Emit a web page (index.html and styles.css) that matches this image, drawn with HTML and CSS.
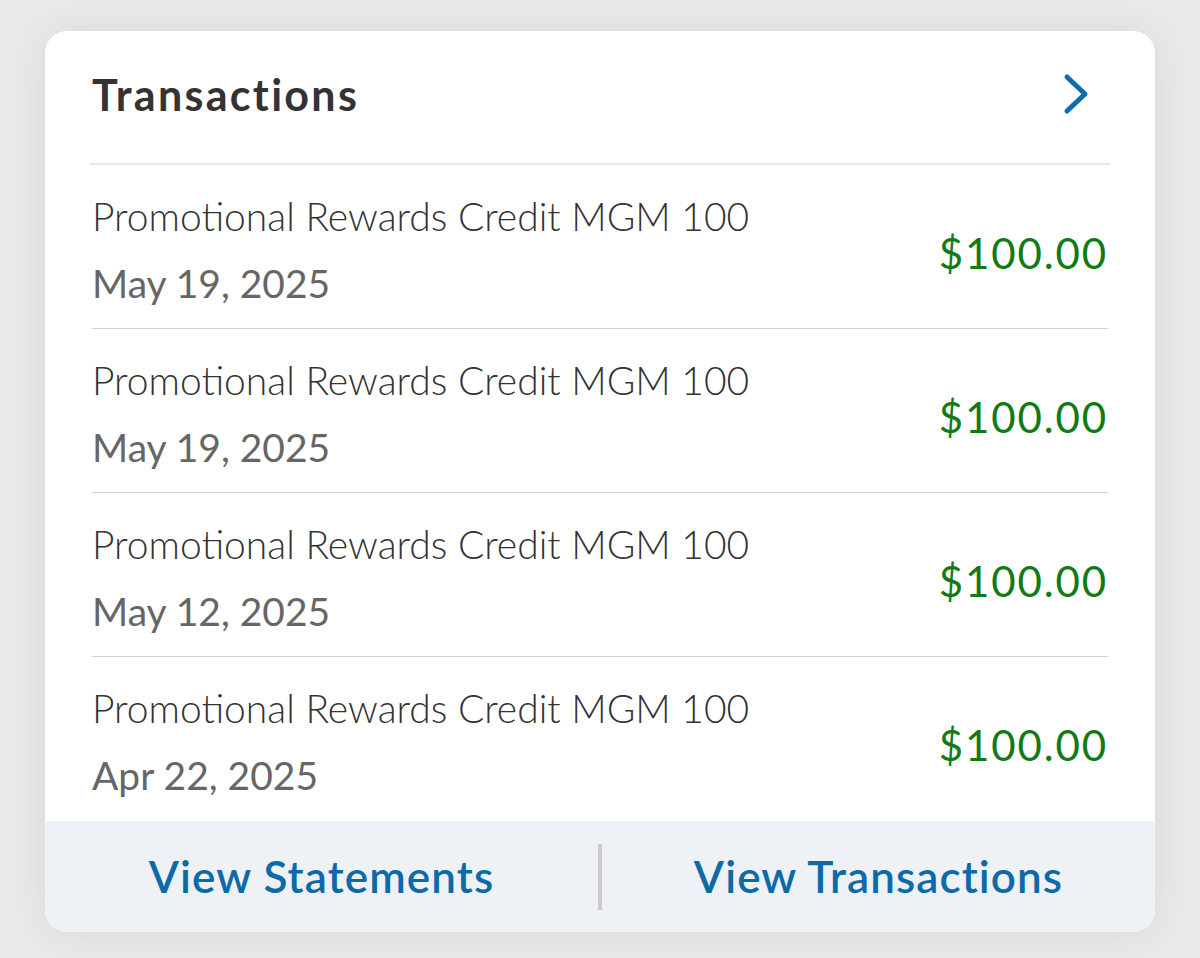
FILE: index.html
```html
<!DOCTYPE html>
<html lang="en">
<head>
<meta charset="utf-8">
<title>Transactions</title>
<link rel="stylesheet" href="styles.css">
</head>
<body>
<div class="card">
  <div class="card-header">
    <h2 class="title">Transactions</h2>
    <svg class="chevron" width="30" height="44" viewBox="0 0 30 44" aria-hidden="true">
      <path d="M5 5 L23 22 L5 39" fill="none" stroke="#0b6cb0" stroke-width="5" stroke-linecap="round" stroke-linejoin="round"/>
    </svg>
  </div>
  <ul class="list">
    <li class="row">
      <div class="info"><div class="desc">Promotional Rewards Credit MGM 100</div><div class="date">May 19, 2025</div></div>
      <div class="amount">$100.00</div>
    </li>
    <li class="row">
      <div class="info"><div class="desc">Promotional Rewards Credit MGM 100</div><div class="date">May 19, 2025</div></div>
      <div class="amount">$100.00</div>
    </li>
    <li class="row">
      <div class="info"><div class="desc">Promotional Rewards Credit MGM 100</div><div class="date">May 12, 2025</div></div>
      <div class="amount">$100.00</div>
    </li>
    <li class="row">
      <div class="info"><div class="desc">Promotional Rewards Credit MGM 100</div><div class="date">Apr 22, 2025</div></div>
      <div class="amount">$100.00</div>
    </li>
  </ul>
  <div class="footer">
    <a class="action">View Statements</a>
    <span class="sep"></span>
    <a class="action">View Transactions</a>
  </div>
</div>
</body>
</html>
```
FILE: styles.css
```css
* { box-sizing: border-box; }
html, body { margin: 0; padding: 0; }
body {
  background: #e9e9e9;
  font-family: Lato, "Open Sans", sans-serif;
  padding: 31px 45px 26px 45px;
  height: 958px;
}
.card {
  background: #fff;
  border-radius: 22px;
  overflow: hidden;
  box-shadow: 0 0 40px rgba(0,0,0,0.07);
  height: 901px;
  display: flex;
  flex-direction: column;
}
.card-header {
  height: 134px;
  margin: 0 45px;
  border-bottom: 2px solid #e8e8e8;
  display: flex;
  align-items: center;
  justify-content: space-between;
  padding: 0 0 6px 2px;
}
.title {
  margin: 0;
  font-size: 43px;
  font-weight: 700;
  color: #333;
  letter-spacing: 2.3px;
}
.chevron { margin-right: 18px; }
.list { list-style: none; margin: 0; padding: 0; flex: 1; }
.row {
  height: 164px;
  margin: 0 47px;
  border-bottom: 1px solid #cfcfcf;
  display: flex;
  align-items: center;
  justify-content: space-between;
}
.row:last-child { border-bottom: none; }
.info { padding-top: 6px; }
.desc {
  font-size: 39px;
  font-weight: 300;
  color: #333;
  line-height: 1;
}
.date {
  font-size: 39px;
  font-weight: 400;
  color: #666;
  margin-top: 28px;
  line-height: 1;
}
.amount {
  font-size: 42px;
  color: #117a14;
  font-weight: 400;
  letter-spacing: 1.9px;
  margin-top: 12px;
}
.footer {
  height: 111px;
  background: #eef1f5;
  display: flex;
  align-items: center;
}
.action {
  flex: 1;
  text-align: center;
  font-size: 44px;
  font-weight: 600;
  letter-spacing: 1.1px;
  color: #0d6aa8;
  padding-bottom: 2px;
}
.sep {
  width: 4px;
  height: 66px;
  background: #c8cacc;
}
```
